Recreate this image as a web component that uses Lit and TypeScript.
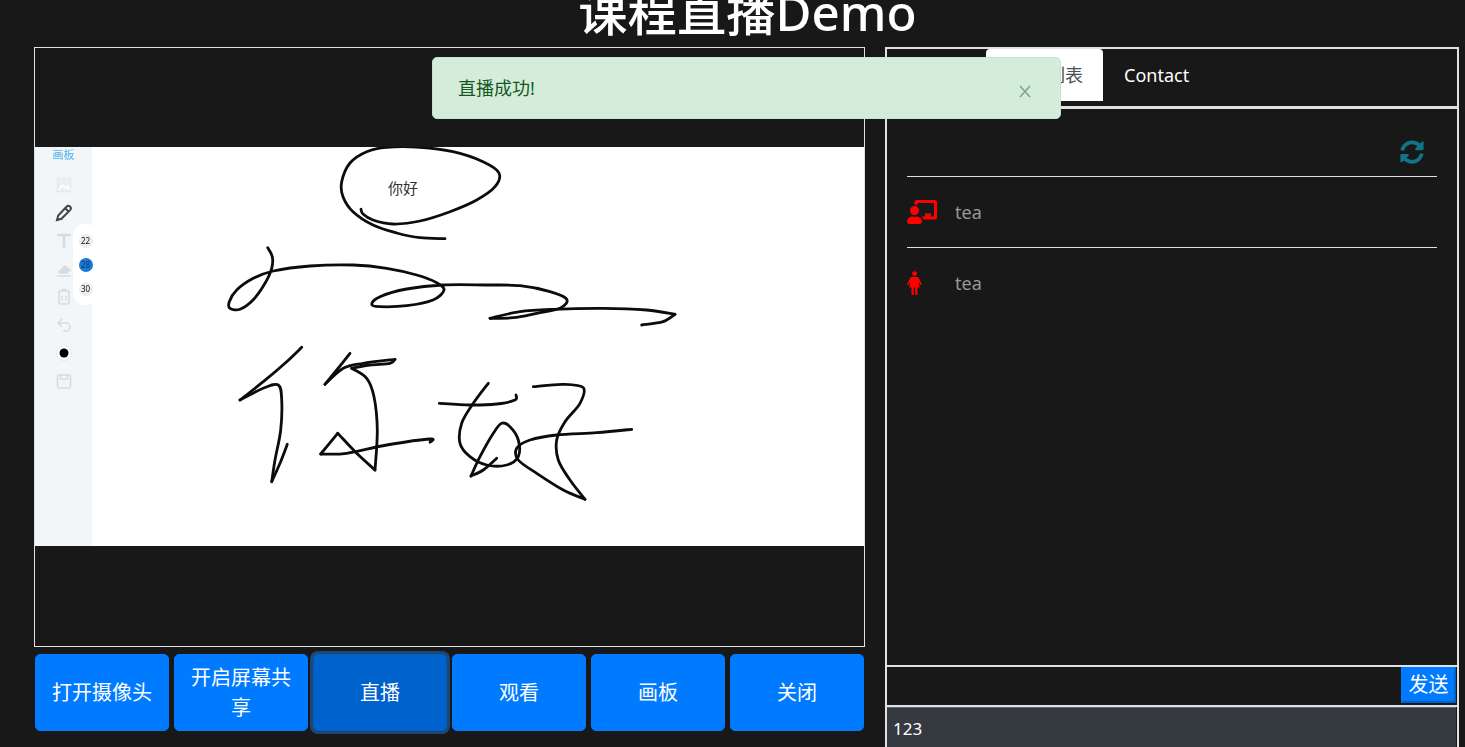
import { LitElement, html, css, svg } from 'lit';
import { customElement, state } from 'lit/decorators.js';

type Point = [number, number];

// strokes of the whiteboard picture, in page coordinates; cusps start a new stroke
const STROKES: Point[][] = [
    [[445, 238.7], [420, 237.7], [396.7, 233], [373, 225], [353, 211.7], [343, 196.7], [341.7, 181.7], [350, 163], [366.7, 151.7], [386.7, 147.3], [420, 147.3], [453, 151.7], [483, 161.7], [499, 173], [495, 186.7], [476.7, 200], [450, 211.7], [420, 221], [393, 224], [373, 220], [363, 214], [361, 209.3]],
    [[267.7, 247.7], [272.3, 256.7], [271.7, 268.3], [265, 283.3], [253, 300], [240, 309.3], [230, 308.3], [229.3, 301.7], [236.7, 290], [253.3, 278.3], [273.3, 271], [310, 266], [353.3, 265], [386.7, 268.3], [416.7, 275], [436.7, 282.7], [444, 290], [433, 300], [406.7, 305.7], [380, 306.7], [371.7, 304.3], [380, 296.7], [406.7, 289], [443, 285], [486.7, 285], [520, 285.7], [550, 291.7], [566.7, 299.3], [560, 308.3], [536.7, 313.3], [513.3, 317.7], [490, 318.3]],
    [[490, 318.3], [520, 311.7], [553, 309.3], [603, 308.3], [646.7, 310], [675, 314.3]],
    [[675, 314.3], [663, 321.7], [641.7, 325]],
    [[301.7, 347.3], [286.7, 361.7], [263.3, 381.7], [240, 400]],
    [[240, 400], [263.3, 388.3], [278.3, 385], [281.7, 400], [280.7, 430], [275, 460], [271.7, 481.7]],
    [[271.7, 481.7], [280, 463.3], [287.3, 444.3]],
    [[350, 353.3], [336.7, 370], [325, 384.3]],
    [[325, 384.3], [343.3, 368.3], [363.3, 363.3], [395, 359.3]],
    [[395, 359.3], [390, 363.3], [370, 365], [351.7, 368.3]],
    [[351.7, 368.3], [366.7, 378.3], [374, 396.7], [377.3, 430], [375, 470]],
    [[375, 470], [356.7, 453.3], [337.7, 433.3]],
    [[337.7, 433.3], [320.7, 454]],
    [[320.7, 454], [346.7, 453.3], [386.7, 445], [430, 439], [430, 442.3]],
    [[488.3, 383.3], [473.3, 403.3], [461.7, 423.3], [460, 443.3], [470, 456.7], [486.7, 465], [506.7, 465], [518.3, 456.7], [518.3, 440], [510, 426.7], [501.7, 423.3], [493.3, 433.3], [480, 456.7], [471, 476]],
    [[471, 476], [483.3, 470], [496.7, 458.3]],
    [[439.3, 403.3], [470, 405], [496.7, 404], [515, 400], [516, 395]],
    [[533.3, 386.7], [563.3, 384.3], [583.3, 387.7], [580, 403.3], [565, 421.7], [556.7, 440], [558.3, 460], [570, 480], [585, 499.3]],
    [[585, 499.3], [563.3, 490], [536.7, 473.3], [518.3, 460], [516.7, 448.3], [530, 440], [556.7, 435], [596.7, 432.7], [631.7, 429.3]],
];

const BUTTONS = ['打开摄像头', '开启屏幕共享', '直播', '观看', '画板', '关闭'];
const SIZES = [22, 28, 30];

// catmull-rom through the points, as cubic beziers
function smooth(p: Point[]) {
    let d = `M${p[0][0]} ${p[0][1]}`;
    for (let i = 0; i < p.length - 1; i++) {
        const a = p[Math.max(i - 1, 0)], b = p[i], c = p[i + 1], e = p[Math.min(i + 2, p.length - 1)];
        const c1x = b[0] + (c[0] - a[0]) / 6, c1y = b[1] + (c[1] - a[1]) / 6;
        const c2x = c[0] - (e[0] - b[0]) / 6, c2y = c[1] - (e[1] - b[1]) / 6;
        d += `C${c1x.toFixed(1)} ${c1y.toFixed(1)} ${c2x.toFixed(1)} ${c2y.toFixed(1)} ${c[0]} ${c[1]}`;
    }
    return d;
}

const TEACHER = 'M208 352c-2.39 0-4.78.35-7.06 1.09C187.98 357.3 174.35 360 160 360c-14.35 0-27.98-2.7-40.95-6.91-2.28-.74-4.66-1.09-7.05-1.09C49.94 352-.33 402.48 0 464.62.14 490.88 21.73 512 48 512h224c26.27 0 47.86-21.12 48-47.38.33-62.14-49.94-112.62-112-112.62zm-48-32c53.02 0 96-42.98 96-96s-42.98-96-96-96-96 42.98-96 96 42.98 96 96 96zM592 0H208c-26.47 0-48 22.25-48 49.59V96c23.42 0 45.1 6.78 64 17.8V64h352v288h-64v-64H384v64h-76.24c19.1 16.69 33.12 38.73 39.69 64H592c26.47 0 48-22.25 48-49.59V49.59C640 22.25 618.47 0 592 0z';
const SYNC = 'M370.72 133.28C339.458 104.008 298.888 87.962 255.848 88c-77.458.068-144.328 53.178-162.791 126.85-1.344 5.363-6.122 9.15-11.651 9.15H24.103c-7.498 0-13.194-6.807-11.807-14.176C33.933 94.924 134.813 8 256 8c66.448 0 126.791 26.136 171.315 68.685L463.03 40.97C478.149 25.851 504 36.559 504 57.941V192c0 13.255-10.745 24-24 24H345.941c-21.382 0-32.09-25.851-16.971-40.971l41.75-41.749zM32 296h134.059c21.382 0 32.09 25.851 16.971 40.971l-41.75 41.75c31.262 29.273 71.835 45.319 114.876 45.28 77.418-.07 144.315-53.144 162.787-126.849 1.344-5.363 6.122-9.15 11.651-9.15h57.304c7.498 0 13.194 6.807 11.807 14.176C478.067 417.076 377.187 504 256 504c-66.448 0-126.791-26.136-171.315-68.685L48.97 471.03C33.851 486.149 8 475.441 8 454.059V320c0-13.255 10.745-24 24-24z';

/**
 * Course live stream demo page.
 */
@customElement('app-root')
class AppRoot extends LitElement {
    static styles = css`
        :host {
            display: block;
            width: 1465px;
            height: 747px;
            overflow: hidden;
            position: relative;
            background: #181818;
            color: #fff;
            font-family: "Noto Sans", "Noto Sans CJK SC", sans-serif;
        }
        h1 {
            margin: 0;
            height: 47px;
            padding-left: 30px;
            font-size: 49.300px;
            font-weight: 500;
            line-height: 24px;
            text-align: center;
        }
        .main {
            display: flex;
            gap: 20px;
            padding-left: 34px;
        }
        .left {
            width: 831px;
        }
        .video {
            box-sizing: border-box;
            height: 600px;
            border: 1px solid #dee2e6;
            padding-top: 99px;
        }
        .board {
            position: relative;
            height: 399px;
            background: #fff;
            overflow: hidden;
            display: flex;
        }
        .drawing {
            position: absolute;
            left: 0;
            top: 0;
            width: 829px;
            height: 399px;
            filter: blur(0.4px);
        }
        .drawing path {
            fill: none;
            stroke: #0c0c0c;
            stroke-width: 2.800;
            stroke-linecap: round;
            stroke-linejoin: round;
        }
        .tools {
            width: 57px;
            background: #f3f6f9;
            display: flex;
            flex-direction: column;
            align-items: center;
            filter: blur(0.4px);
        }
        .tools .name {
            font-size: 11px;
            line-height: 14px;
            color: #4fb0ee;
            margin-top: 1px;
            margin-bottom: 14px;
        }
        .tools svg {
            display: block;
            width: 18px;
            height: 18px;
            margin-bottom: 10px;
            fill: none;
            stroke: #d9dcdf;
            stroke-width: 1.600;
        }
        .tools svg.on {
            stroke: #444;
            stroke-width: 2;
        }
        .tools svg.bold {
            stroke-width: 2.600;
        }
        .sizes {
            position: absolute;
            left: 38px;
            top: 77px;
            width: 25px;
            height: 81px;
            box-sizing: border-box;
            padding-top: 10px;
            background: #fff;
            border-radius: 12px;
            display: flex;
            flex-direction: column;
            align-items: center;
            gap: 10px;
            filter: blur(0.3px);
        }
        .sizes span {
            width: 14px;
            height: 14px;
            border-radius: 50%;
            background: #eee;
            color: #111;
            font-size: 8px;
            line-height: 14px;
            text-align: center;
        }
        .sizes span.on {
            background: #1a7ad6;
            color: #0b3a66;
        }
        .hello {
            position: absolute;
            left: 353px;
            top: 32px;
            font-size: 15px;
            line-height: 18px;
            color: #333;
        }
        .buttons {
            display: grid;
            grid-template-columns: repeat(6, 134px);
            gap: 5px;
            padding: 7px 1px 0;
        }
        .buttons button {
            height: 77px;
            padding: 0 12px;
            border: 1px solid #007bff;
            border-radius: 5px;
            background: #007bff;
            color: #fff;
            font: inherit;
            font-size: 20px;
            line-height: 30px;
        }
        .buttons button.active {
            background: #0062cc;
            border-color: #005cbf;
            box-shadow: 0 0 0 3px rgba(38, 143, 255, 0.4);
        }
        .right {
            box-sizing: border-box;
            width: 574px;
            height: 702px;
            border: 2px solid #dee2e6;
            display: flex;
            flex-direction: column;
        }
        .tabs {
            display: flex;
            height: 60px;
            flex: none;
            box-sizing: border-box;
            padding-left: 99px;
            border-bottom: 3px solid #dee2e6;
        }
        .tab {
            height: 52px;
            box-sizing: border-box;
            padding: 0 20px;
            border: 1px solid transparent;
            font-size: 18px;
            line-height: 50px;
        }
        .tab.active {
            background: #fff;
            color: #495057;
            border-radius: 4px 4px 0 0;
            padding: 0 19px 0 24px;
        }
        .panel {
            flex: none;
            height: 556px;
            box-sizing: border-box;
            padding: 0 20px;
        }
        .refresh {
            height: 68px;
            box-sizing: border-box;
            border-bottom: 1px solid #dee2e6;
            display: flex;
            justify-content: flex-end;
            padding: 31px 13px 0 0;
        }
        .refresh svg {
            width: 24px;
            height: 24px;
            fill: #117487;
        }
        .row {
            height: 71px;
            box-sizing: border-box;
            display: flex;
            align-items: center;
            color: #999;
            font-size: 18px;
        }
        .refresh + .row {
            height: 70px;
        }
        .row + .row {
            border-top: 1px solid #dee2e6;
        }
        .row .icon {
            width: 48px;
            display: flex;
        }
        .row svg {
            height: 24px;
            fill: #f00;
        }
        .send {
            flex: none;
            height: 42px;
            box-sizing: border-box;
            border-top: 2px solid #dee2e6;
            border-bottom: 2px solid #dee2e6;
            display: flex;
            justify-content: flex-end;
        }
        .send button {
            width: 55px;
            height: 36px;
            margin-right: 1px;
            padding: 0;
            box-sizing: border-box;
            border: 2px solid #007bff;
            border-right-color: #0062c4;
            border-bottom-color: #0062c4;
            background: #007bff;
            color: #fff;
            font: inherit;
            font-size: 20px;
            line-height: 30px;
        }
        .input {
            flex: 1;
            margin-right: 1px;
            padding: 0 6px;
            background: #343a40;
            border-top: 1px solid #666;
            font-size: 17px;
            line-height: 42px;
        }
        .alert {
            position: absolute;
            left: 432px;
            top: 57px;
            width: 629px;
            height: 62px;
            box-sizing: border-box;
            padding: 0 25px;
            background: #d4edda;
            border: 1px solid #c3e6cb;
            border-radius: 5px;
            color: #155724;
            font-size: 18px;
            line-height: 60px;
        }
        .alert svg {
            position: absolute;
            right: 29px;
            top: 27px;
            width: 12px;
            height: 13px;
            stroke: #7ea58c;
            stroke-width: 1.600;
        }
    `;

    @state()
    activeButton = 2;

    renderTools() {
        return html`
            <div class="tools">
                <div class="name">画板</div>
                <svg viewBox="0 0 18 18"><rect x="2.500" y="2.500" width="13" height="13" fill="#eceef0" stroke="#e6e8ea" /><path d="M3.500 14l4-5 3 3 2-2 2.500 4" stroke="#fff" /></svg>
                <svg class="on" viewBox="0 0 18 18"><path d="M2 16l1.200-4.500 8.300-8.800a2 2 0 0 1 3.600 3.400l-8.600 8.700zM10.500 4.500l3.500 3.500" /></svg>
                <svg class="bold" viewBox="0 0 18 18"><path d="M2 3h14M9 3v13" /></svg>
                <svg viewBox="0 0 18 18"><path d="M4 12l6-6 5 4-3 3H6zM2 16h14" fill="#d9dcdf" /></svg>
                <svg viewBox="0 0 18 18"><rect x="4" y="3" width="10" height="13" rx="1" /><path d="M7 3V1.500h4V3M7 8v5M11 8v5" /></svg>
                <svg viewBox="0 0 18 18"><path d="M7 3L3 7l4 4M3 7h8a4 4 0 0 1 0 8H8" /></svg>
                <svg viewBox="0 0 18 18" style="stroke: #e8e8e8; stroke-width: 1"><circle cx="9" cy="9" r="7.500" fill="#fff" /><circle cx="9" cy="9" r="4.500" fill="#000" stroke="none" /></svg>
                <svg viewBox="0 0 18 18"><rect x="2.500" y="3" width="13" height="13" rx="1" /><path d="M5.500 3v4h7V3" /></svg>
            </div>
        `;
    }

    render() {
        const paths = STROKES.map(s => svg`<path d=${smooth(s)} />`);
        return html`
            <h1>课程直播Demo</h1>
            <div class="main">
                <div class="left">
                    <div class="video">
                        <div class="board">
                            ${this.renderTools()}
                            <svg class="drawing" viewBox="35 147 829 399">${paths}</svg>
                            <div class="sizes">
                                ${SIZES.map(n => html`<span class=${n === 28 ? 'on' : ''}>${n}</span>`)}
                            </div>
                            <div class="hello">你好</div>
                        </div>
                    </div>
                    <div class="buttons">
                        ${BUTTONS.map((b, i) => html`<button class=${i === this.activeButton ? 'active' : ''}>${b}</button>`)}
                    </div>
                </div>
                <div class="right">
                    <div class="tabs">
                        <div class="tab active">用户列表</div>
                        <div class="tab">Contact</div>
                    </div>
                    <div class="panel">
                        <div class="refresh"><svg viewBox="0 0 512 512"><path d=${SYNC} /></svg></div>
                        <div class="row">
                            <span class="icon"><svg viewBox="0 0 640 512"><path d=${TEACHER} /></svg></span>tea
                        </div>
                        <div class="row">
                            <span class="icon">
                                <svg viewBox="0 0 15 24"><circle cx="7.500" cy="2.600" r="2.400" /><path d="M4.600 6h5.800c.6 0 1 .3 1.300.8l3.100 6.400c.3.700-.7 1.300-1.200.6l-1.800-2.800.9 5.500H10.500V23c0 1.300-2.300 1.300-2.300 0v-6.500H6.800V23c0 1.300-2.300 1.300-2.300 0v-6.500H2.300l.9-5.500-1.800 2.800c-.5.700-1.500.1-1.200-.6l3.100-6.400C3.600 6.300 4 6 4.600 6z" /></svg>
                            </span>tea
                        </div>
                    </div>
                    <div class="send"><button>发送</button></div>
                    <div class="input">123</div>
                </div>
            </div>
            <div class="alert">
                直播成功!
                <svg viewBox="0 0 12 13"><path d="M1 1l10 11M11 1L1 12" /></svg>
            </div>
        `;
    }
}

declare global {
    interface HTMLElementTagNameMap {
        'app-root': AppRoot;
    }
}
